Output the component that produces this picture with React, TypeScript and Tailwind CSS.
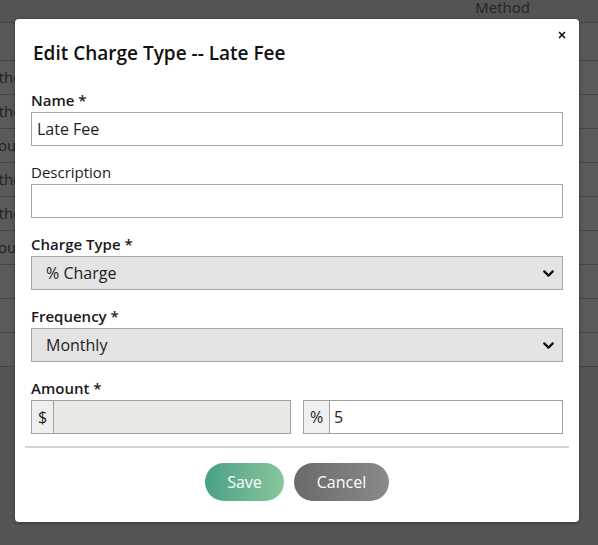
// Charge type edit modal over a dimmed table
import { ChevronDown, X } from 'lucide-react';

const ROWS = ['Other', 'Other', 'Hourly', 'Other', 'Other', 'Hourly', '', '', ''];

function Field({ label, bold = true, children }: { label: string; bold?: boolean; children: React.ReactNode }) {
  return (
    <div className="flex flex-col">
      <label className={`text-[15px] leading-[20px] text-[#1a1a1a] ${bold ? 'font-semibold' : 'font-normal'}`}>
        {label}
      </label>
      <div className="mt-[2px]">{children}</div>
    </div>
  );
}

function SelectBox({ value }: { value: string }) {
  return (
    <div className="h-[34px] flex items-center justify-between border border-[#a6a6a6] bg-[#e4e4e4] pl-[14px] pr-[5px]">
      <span className="text-[16px] text-[#222]">{value}</span>
      <ChevronDown size={17} strokeWidth={3.2} className="text-[#111]" />
    </div>
  );
}

export default function App() {
  return (
    <div
      className="relative w-[598px] h-[545px] overflow-hidden bg-[#555555]"
      style={{ fontFamily: '"Open Sans", "Noto Sans", sans-serif' }}
    >
      {/* Background table (dimmed) */}
      <div className="flex flex-col">
        <div className="h-[23px] border-b border-[#454545] bg-[#545454] flex justify-end pr-[68px]">
          <span className="text-[15px] leading-[14px] text-[#252525]">Method</span>
        </div>
        <div className="h-[38px] border-b border-[#454545] bg-[#585858]" />
        {ROWS.map((r, i) => (
          <div key={i} className="h-[34px] border-b border-[#454545] bg-[#5a5a5a] flex items-center overflow-hidden">
            <span className="ml-[-13px] text-[15px] text-[#1e1e1e]">{r}</span>
          </div>
        ))}
      </div>

      {/* Modal */}
      <div className="absolute left-[15px] top-[19px] w-[564px] h-[503px] bg-white rounded-[4px] shadow-[0_1px_4px_rgba(0,0,0,0.35)]">
        <button className="absolute right-[12px] top-[11px] text-[#111]">
          <X size={10} strokeWidth={4} />
        </button>
        <div className="px-[16px] pt-[22px]">
          <h2 className="text-[19px] leading-[25px] font-semibold text-[#111] ml-[2px]">Edit Charge Type -- Late Fee</h2>

          <div className="mt-[24px] flex flex-col gap-[16px]">
            <Field label="Name *">
              <div className="h-[34px] flex items-center border border-[#a6a6a6] bg-white px-[5px]">
                <span className="text-[16px] text-[#222]">Late Fee</span>
              </div>
            </Field>
            <Field label="Description" bold={false}>
              <div className="h-[34px] border border-[#a6a6a6] bg-white" />
            </Field>
            <Field label="Charge Type *">
              <SelectBox value="% Charge" />
            </Field>
            <Field label="Frequency *">
              <SelectBox value="Monthly" />
            </Field>
            <Field label="Amount *">
              <div className="flex gap-[12px]">
                <div className="flex-1 h-[34px] flex border border-[#a0a0a0]">
                  <div className="w-[22px] flex items-center justify-center bg-[#efefef] border-r border-[#a0a0a0] text-[16px] text-[#222]">
                    $
                  </div>
                  <div className="flex-1 bg-[#e8e8e4]" />
                </div>
                <div className="flex-1 h-[34px] flex border border-[#a0a0a0]">
                  <div className="w-[26px] flex items-center justify-center bg-[#efefef] border-r border-[#a0a0a0] text-[16px] text-[#222]">
                    %
                  </div>
                  <div className="flex-1 bg-white flex items-center px-[4px] text-[16px] text-[#222]">5</div>
                </div>
              </div>
            </Field>
          </div>
        </div>

        <div className="mx-[10px] mt-[12px] border-t-2 border-[#d4d4d4]" />

        <div className="flex justify-center gap-[10px] mt-[15px]">
          <button className="w-[79px] h-[38px] rounded-full bg-gradient-to-r from-[#47a184] to-[#88c69c] text-white text-[16px]">
            Save
          </button>
          <button className="w-[95px] h-[38px] rounded-full bg-gradient-to-r from-[#6a6a6a] to-[#8a8a8a] text-white text-[16px]">
            Cancel
          </button>
        </div>
      </div>
    </div>
  );
}
